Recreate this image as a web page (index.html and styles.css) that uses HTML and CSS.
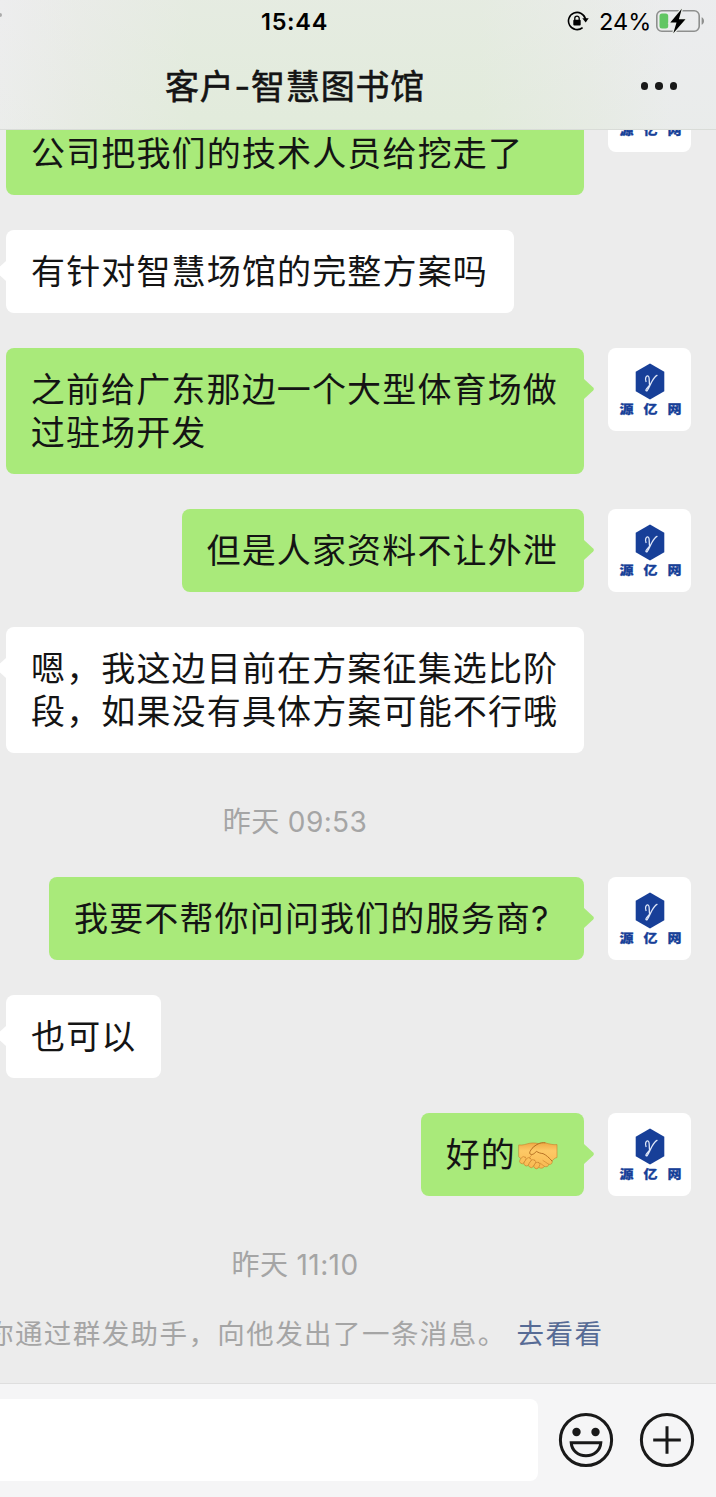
FILE: index.html
```html
<!DOCTYPE html>
<html lang="zh-CN">
<head>
<meta charset="utf-8">
<title>客户-智慧图书馆</title>
<link rel="stylesheet" href="styles.css">
</head>
<body>
<svg class="defs" aria-hidden="true">
  <symbol id="logo" viewBox="0 0 30 37">
    <path d="M15 .5 29.3 8.8V28.2L15 36.5.7 28.2V8.800Z" fill="#173f98"/>
    <path d="M11 18.500C9.800 15.800 11 12.600 13 13c2 .6.800 5.500 1.600 9M22 12.300C19.500 13.300 18 16.500 16.500 19.300S13.700 25.500 12.300 27.500c-.8.900-1.800.1-1.200-1C12 25 13.500 23.800 14.600 22" fill="none" stroke="#dfe7f8" stroke-width="1.300" stroke-linecap="round"/>
  </symbol>
</svg>
<div class="app">
  <header class="header">
    <div class="status">
      <span class="edge-mark"></span>
      <span class="clock">15:44</span>
      <div class="indicators">
        <svg class="lock" width="22" height="22" viewBox="0 0 22 22">
          <path d="M15.600 17.600A8.600 8.600 0 1 1 18.500 9.200" fill="none" stroke="#000" stroke-width="1.600"/>
          <path d="M15.300 8.300H21.700L18.700 12.600Z"/>
          <rect x="6.300" y="9.800" width="7.400" height="5.600" rx="1"/>
          <path d="M7.800 10V8.300a2.200 2.200 0 0 1 4.400 0V10" fill="none" stroke="#000" stroke-width="1.300"/>
        </svg>
        <span class="percent">24%</span>
        <svg class="battery" width="51" height="26" viewBox="0 0 51 26">
          <rect x="1.800" y="2.800" width="42.400" height="20.400" rx="5" fill="none" stroke="#8e8f8e" stroke-width="1.600"/>
          <path d="M46.600 9.200c3.200 1.200 3.200 6.400 0 7.600Z" fill="#8e8f8e"/>
          <rect x="4.500" y="5.500" width="8.700" height="15" rx="2.500" fill="#61c663"/>
          <path d="M26.800.7 15.300 14.400H21.500L18.300 25.300 30.500 11.200H23.900Z" stroke="#e9ece8" stroke-width="2.500" paint-order="stroke"/>
        </svg>
      </div>
    </div>
    <div class="titlebar">
      <h1 class="title">客户-智慧图书馆</h1>
      <div class="more"><i></i><i></i><i></i></div>
    </div>
  </header>

  <main class="chat">
    <div class="row mine">
      <div class="bubble continued">公司把我们的技术人员给挖走了</div>
      <div class="avatar"><svg class="hex"><use href="#logo"/></svg><span class="brand">源亿网</span></div>
    </div>
    <div class="row"><div class="bubble">有针对智慧场馆的完整方案吗</div></div>
    <div class="row mine">
      <div class="bubble">之前给广东那边一个大型体育场做<br>过驻场开发</div>
      <div class="avatar"><svg class="hex"><use href="#logo"/></svg><span class="brand">源亿网</span></div>
    </div>
    <div class="row mine">
      <div class="bubble">但是人家资料不让外泄</div>
      <div class="avatar"><svg class="hex"><use href="#logo"/></svg><span class="brand">源亿网</span></div>
    </div>
    <div class="row"><div class="bubble">嗯，我这边目前在方案征集选比阶<br>段，如果没有具体方案可能不行哦</div></div>
    <div class="time">昨天 09:53</div>
    <div class="row mine">
      <div class="bubble question">我要不帮你问问我们的服务商?</div>
      <div class="avatar"><svg class="hex"><use href="#logo"/></svg><span class="brand">源亿网</span></div>
    </div>
    <div class="row"><div class="bubble short">也可以</div></div>
    <div class="row mine">
      <div class="bubble">好的<svg class="emoji" width="40" height="32" viewBox="0 0 40 32">
        <defs><linearGradient id="skin" gradientUnits="userSpaceOnUse" x1="0" y1="2" x2="0" y2="30"><stop offset="0" stop-color="#eda23e"/><stop offset=".35" stop-color="#fdc966"/><stop offset="1" stop-color="#f8b850"/></linearGradient></defs>
        <g fill="url(#skin)" stroke="#c9802c" stroke-width=".6" stroke-linejoin="round" stroke-linecap="round">
          <path d="M1 6C5 6.500 8 5 12 4.200c4-.6 8 0 11 1.200l-4 14-6 7L4 20.500 1 18Z"/>
          <path d="M14 9.500C18 5.500 22 3.200 27 3.800 31.500 5 35 6 39 5.600V18.500C36.500 19 35.600 20.300 34 22c.8 2.600-1.200 3.800-3.200 3.300-.4 2.400-2.500 3-4.500 2-1 2.300-3.500 2.400-5.300 1.200-1.500 1.300-4 .5-4.800-1.500L11 19 17 12.500Z"/>
          <path d="M34 22C31 18.500 28 16 25 14.600c-2.500-.2-4.500-.9-6.600-2.300-1.800 2.600-4.600 4-6.300 2.700-1.300-1.100.5-3.700 1.900-5.500C18 5.500 22 3.200 27 3.800" stroke="#b06a1e" stroke-width=".9"/>
          <rect x="2.400" y="17.300" width="5" height="7.500" rx="2.500" transform="rotate(35 4.700 21)"/>
          <rect x="6.800" y="18.200" width="5.200" height="9" rx="2.600" transform="rotate(35 9.300 23)"/>
          <rect x="11.500" y="20.300" width="5.200" height="8.500" rx="2.600" transform="rotate(35 14 24.600)"/>
          <rect x="16.200" y="23" width="4.900" height="6.800" rx="2.400" transform="rotate(35 18.700 26.700)"/>
          <path d="m25 21.500 5.800 3.800M22 24l4.300 3.300" fill="none"/>
        </g>
      </svg></div>
      <div class="avatar"><svg class="hex"><use href="#logo"/></svg><span class="brand">源亿网</span></div>
    </div>
    <div class="time last">昨天 11:10</div>
    <div class="notice">你通过群发助手，向他发出了一条消息。<a class="link">去看看</a></div>
  </main>

  <footer class="inputbar">
    <div class="field"></div>
    <svg class="tool" width="56" height="56" viewBox="0 0 56 56" fill="none" stroke="#191919" stroke-width="3">
      <circle cx="28" cy="28" r="25.600"/>
      <circle cx="18.500" cy="20" r="4.200" fill="#191919" stroke="none"/>
      <circle cx="37.500" cy="20" r="4.200" fill="#191919" stroke="none"/>
      <path d="M13.200 30.700H42.800C42.300 38.500 36 43.800 28 43.800S13.700 38.500 13.200 30.700Z"/>
    </svg>
    <svg class="tool" width="56" height="56" viewBox="0 0 56 56" fill="none" stroke="#191919" stroke-width="3">
      <circle cx="28" cy="28" r="25.600"/>
      <path d="M28 14.200V41.800M14.200 28H41.800"/>
    </svg>
  </footer>
</div>
</body>
</html>
```
FILE: styles.css
```css
* { box-sizing: border-box; }

body {
  margin: 0;
  background: #ececec;
  color: #141414;
  font-family: Inter, "Noto Sans CJK SC", sans-serif;
}

.defs { display: none; }

.app {
  display: flex;
  flex-direction: column;
  width: 716px;
  height: 1497px;
  overflow: hidden;
}

.header {
  flex: none;
  height: 130px;
  border-bottom: 1px solid #d9dcd8;
  background:
    linear-gradient(to bottom, rgba(237, 237, 238, .3), rgba(224, 235, 216, .15)),
    linear-gradient(to right, #ededee 0, #e8ebe5 80px, #e2ebdc 190px, #e2ebdc 480px, #e7ebe5 590px, #ebecee 670px);
}

.status {
  display: grid;
  grid-template-columns: 1fr auto 1fr;
  align-items: center;
  width: 706px;
  height: 42px;
}

.edge-mark {
  width: 2px;
  height: 4px;
  margin-top: -12px;
  border-radius: 0 2px 2px 0;
  background: #aaa;
}

.clock {
  width: 68px;
  margin-right: 49px;
  margin-left: -67px;
  color: #000;
  font-size: 23.5px;
  font-weight: 600;
  letter-spacing: .7px;
  white-space: nowrap;
}

.indicators {
  display: flex;
  align-items: center;
  justify-content: flex-end;
}

.lock { margin-right: 10px; }

.percent {
  width: 51px;
  margin-right: 5px;
  color: #000;
  font-size: 23.5px;
  white-space: nowrap;
}

.battery { flex: none; }

.titlebar {
  display: flex;
  align-items: center;
  justify-content: space-between;
  height: 88px;
  padding: 0 39px 0 165px;
}

.title {
  margin: 2px 0 0;
  font-size: 34px;
  font-weight: 400;
  line-height: 46px;
  letter-spacing: .8px;
  white-space: nowrap;
  -webkit-text-stroke: .6px #141414;
}

.more { display: flex; gap: 7px; }
.more i { width: 7.5px; height: 7.5px; border-radius: 50%; background: #191919; }

.chat {
  flex: 1;
  min-height: 0;
  display: flex;
  flex-direction: column;
  justify-content: flex-end;
  gap: 35px;
  padding: 0 25px 0 6px;
  overflow: hidden;
}

.row {
  flex: none;
  display: flex;
  align-items: flex-start;
}

.row.mine { justify-content: flex-end; gap: 24px; }

.bubble {
  position: relative;
  min-height: 83px;
  padding: 20px 26px 20px 25px;
  border-radius: 8px;
  background: #fff;
  font-size: 34px;
  line-height: 43px;
  letter-spacing: 1.15px;
  white-space: nowrap;
}

.mine .bubble { background: #a9ea7a; }

.bubble::before {
  content: "";
  position: absolute;
  top: 31px;
  left: -10px;
  width: 10px;
  height: 20px;
  background: inherit;
  clip-path: polygon(100% 0, 8% 43%, 0 50%, 8% 57%, 100% 100%);
}

.mine .bubble::before {
  left: auto;
  right: -10px;
  clip-path: polygon(0 0, 92% 43%, 100% 50%, 92% 57%, 0 100%);
}

.bubble.continued {
  width: 578px;
  height: 126px;
  padding-top: 63px;
}

.bubble.question { width: 535px; }
.bubble.short { width: 155px; }

.avatar {
  display: flex;
  flex-direction: column;
  align-items: center;
  width: 83px;
  height: 83px;
  padding-top: 14.5px;
  border-radius: 8px;
  background: #fff;
}

.hex { width: 30px; height: 37px; margin-left: 1px; }

.brand {
  margin: 1px 0 0 12px;
  color: #173f98;
  font-family: "Noto Sans CJK SC", sans-serif;
  font-size: 14px;
  font-weight: 900;
  line-height: 16px;
  letter-spacing: 10px;
  white-space: nowrap;
  transform: scaleY(.88);
  -webkit-text-stroke: .3px #173f98;
}

.emoji { margin: 0 0 0 2px; vertical-align: -4px; }

.time {
  flex: none;
  width: 590px;
  height: 54px;
  margin-left: -6px;
  color: #a5a5a5;
  font-size: 28px;
  line-height: 68px;
  letter-spacing: .4px;
  text-align: center;
}

.time.last { height: 33px; }

.notice {
  flex: none;
  height: 84px;
  margin-left: -20px;
  color: #a5a5a5;
  font-size: 27.5px;
  line-height: 71px;
  letter-spacing: 1.42px;
  white-space: nowrap;
}

.link { margin-left: 10px; color: #576b95; }

.inputbar {
  flex: none;
  display: flex;
  align-items: flex-start;
  height: 114px;
  padding: 15px 21px 0 0;
  border-top: 1px solid #dedede;
  background: #f5f5f6;
}

.field {
  flex: 1;
  height: 82px;
  margin-right: 20px;
  border-radius: 0 8px 8px 0;
  background: #fff;
}

.tool { flex: none; margin-top: 13px; }
.tool + .tool { margin-left: 25.5px; }
```
